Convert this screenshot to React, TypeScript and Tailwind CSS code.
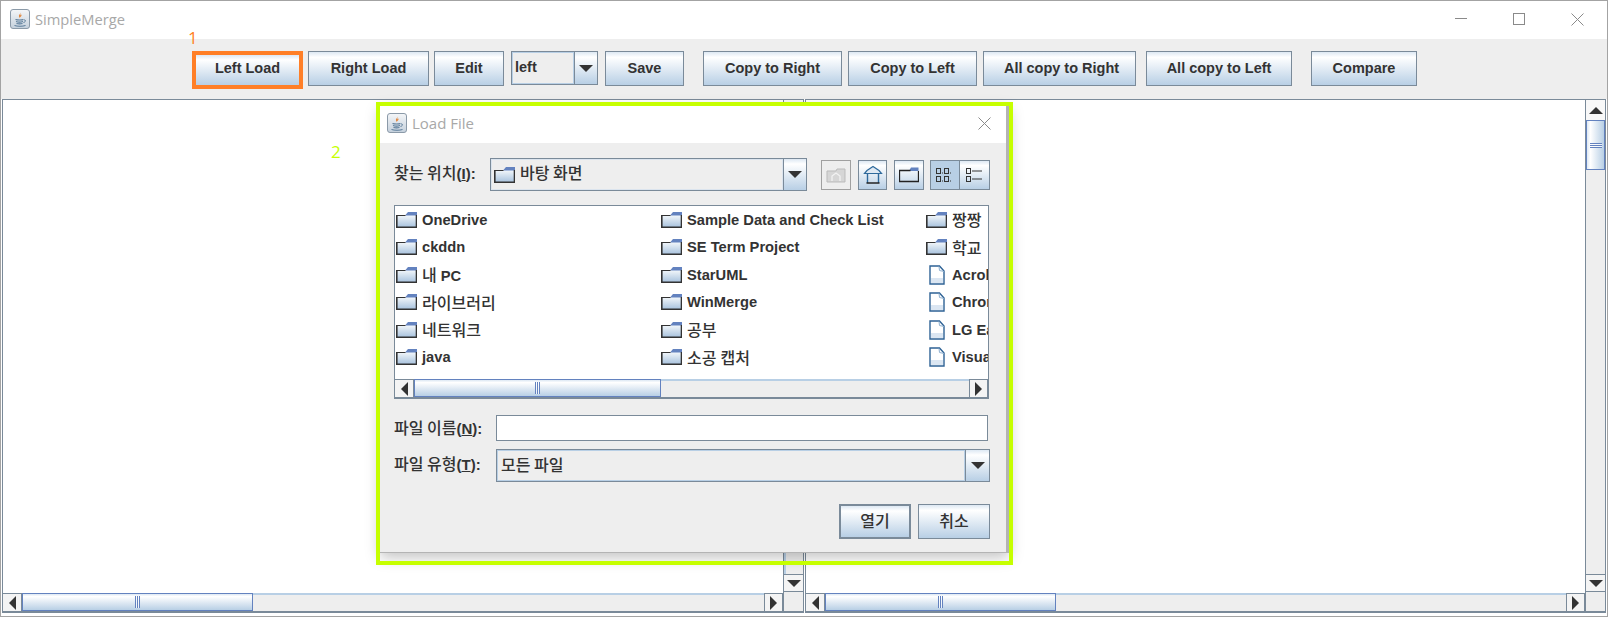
import type { ReactNode } from 'react';

const btnGradient = 'bg-[linear-gradient(#dde8f3_0%,#ffffff_16%,#b8cfe5_100%)]';
const latin = "font-['Liberation_Sans','Noto_Sans_CJK_KR',sans-serif]";

function Ko({ children }: { children: ReactNode }) {
	return <span className="font-['Noto_Sans_CJK_KR',sans-serif] text-[16px] font-medium">{children}</span>;
}

function JavaIcon() {
	return (
		<svg width="20" height="20" viewBox="0 0 20 20" className="shrink-0">
			<defs>
				<linearGradient id="jv" x1="0" y1="0" x2="0" y2="1">
					<stop offset="0" stopColor="#f4f6f8" />
					<stop offset="1" stopColor="#c4d0dc" />
				</linearGradient>
			</defs>
			<rect x="0.5" y="0.5" width="19" height="19" rx="2.5" fill="url(#jv)" stroke="#8b9aa8" />
			<path d="M10.5 2.5c1 2-2 3-1.5 5 .2.8.8 1.2 1 1.5-.1-1.2 2.6-2 1.4-4.2.5 1.6-1 2.2-1 .6 0-1 .6-1.8.1-2.9z" fill="#e0843a" />
			<path d="M5.5 10.5c2 .7 6.500.7 8 0M6 12.500c1.500.5 5.500.5 7 0M6.500 14.500c1.500.4 4.500.4 6 0" fill="none" stroke="#5b7c9a" strokeWidth="1.100" />
			<path d="M4.500 16.500c3 1 8 1 11 0M14 11c2-.5 2 2-.5 2.500" fill="none" stroke="#5b7c9a" strokeWidth="1" />
		</svg>
	);
}

function FolderIcon() {
	return (
		<svg width="21" height="16" viewBox="0 0 21 16" className="shrink-0">
			<defs>
				<linearGradient id="fd" x1="0" y1="0" x2="0" y2="1">
					<stop offset="0" stopColor="#f4f8fb" />
					<stop offset="1" stopColor="#a9c3de" />
				</linearGradient>
			</defs>
			<rect x="1" y="3" width="19" height="12" fill="url(#fd)" />
			<path d="M12 0h9v3.500H9z" fill="#6382bf" />
			<path d="M0.500 3.500h9" fill="none" stroke="#333" />
			<path d="M0.800 3v12.200h19.700V3" fill="none" stroke="#333" strokeWidth="1.600" />
		</svg>
	);
}

function FileIcon() {
	return (
		<svg width="16" height="20" viewBox="0 0 16 20" className="shrink-0">
			<path d="M1 1h9.500l4.500 5v13H1z" fill="#fff" stroke="#2e6295" strokeWidth="1.400" />
			<path d="M2 13h12v5H2z" fill="#dbe6f2" />
			<path d="M10 1.500l.5 4 4.500 1" fill="none" stroke="#8fb0d0" />
		</svg>
	);
}

function Triangle({ dir }: { dir: 'up' | 'down' | 'left' | 'right' }) {
	const points = {
		up: '0,7 14,7 7,0',
		down: '0,0 14,0 7,7',
		left: '7,0 7,14 0,7',
		right: '0,0 0,14 7,7'
	}[dir];
	const vertical = dir === 'up' || dir === 'down';
	return (
		<svg width={vertical ? 14 : 7} height={vertical ? 7 : 14} viewBox={vertical ? '0 0 14 7' : '0 0 7 14'}>
			<polygon points={points} fill="#333333" />
		</svg>
	);
}

function HScrollBar({ thumb }: { thumb: number }) {
	return (
		<div className="flex h-[19px] w-full border-b border-[#7a8a99] bg-[#eeeeee]">
			<div className="flex w-[19px] shrink-0 items-center justify-center border-t border-r border-[#7a8a99] bg-[#f4f4f4]">
				<Triangle dir="left" />
			</div>
			<div
				className={`flex shrink-0 items-center justify-center border border-[#6382bf] ${btnGradient}`}
				style={{ width: thumb }}
			>
				<div className="flex h-[12px] gap-px bg-white/70">
					<div className="w-px bg-[#6382bf]" />
					<div className="w-px bg-[#6382bf]" />
					<div className="w-px bg-[#6382bf]" />
				</div>
			</div>
			<div className="flex-1 border-t-2 border-[#b8cfe5] bg-[#eeeeee]" />
			<div className="flex w-[19px] shrink-0 items-center justify-center border-x border-t border-[#7a8a99] bg-[#f4f4f4]">
				<Triangle dir="right" />
			</div>
		</div>
	);
}

function VScrollBar({ withThumb }: { withThumb: boolean }) {
	return (
		<div className="flex w-[20px] shrink-0 flex-col border-l border-[#7a8a99] bg-[#eeeeee] pb-px">
			<div className="flex h-[20px] shrink-0 items-center justify-center bg-[#f8f8f8]">
				<Triangle dir="up" />
			</div>
			{withThumb && (
				<div className="flex h-[50px] shrink-0 items-center justify-center border border-[#6382bf] bg-[linear-gradient(90deg,#dde8f3_0%,#ffffff_20%,#b8cfe5_100%)]">
					<div className="flex w-[12px] flex-col gap-px bg-white/70">
						<div className="h-px bg-[#6382bf]" />
						<div className="h-px bg-[#6382bf]" />
						<div className="h-px bg-[#6382bf]" />
					</div>
				</div>
			)}
			{withThumb ? <div className="flex-1" /> : <div className="flex-1 border-l-2 border-[#b8cfe5]" />}
			<div className="flex h-[18px] shrink-0 items-center justify-center border-y border-[#7a8a99] bg-[#f4f4f4]">
				<Triangle dir="down" />
			</div>
		</div>
	);
}

function ScrollPane({ width, thumb, withThumb }: { width: string; thumb: number; withThumb: boolean }) {
	return (
		<div className={`flex h-[514px] flex-col border border-[#7a8a99] bg-white ${width}`}>
			<div className="flex min-h-0 flex-1">
				<div className="flex-1 bg-white" />
				<VScrollBar withThumb={withThumb} />
			</div>
			<div className="flex h-[19px] shrink-0">
				<div className="flex-1">
					<HScrollBar thumb={thumb} />
				</div>
				<div className="w-[20px] shrink-0 border-l border-b border-[#7a8a99] bg-[#eeeeee]" />
			</div>
		</div>
	);
}

function ToolButton({ label, className }: { label: string; className: string }) {
	return (
		<button
			className={`flex h-[35px] shrink-0 items-center justify-center border border-[#7a8a99] pt-px text-[14.5px] font-bold text-[#333333] ${btnGradient} ${className}`}
		>
			{label}
		</button>
	);
}

function SmallIconButton({ children, className }: { children: ReactNode; className: string }) {
	return (
		<div className={`flex h-[30px] items-center justify-center border ${className}`}>{children}</div>
	);
}

const column1 = ['OneDrive', 'ckddn', '내 PC', '라이브러리', '네트워크', 'java'];
const column2 = ['Sample Data and Check List', 'SE Term Project', 'StarUML', 'WinMerge', '공부', '소공 캡처'];
const column3 = [
	{ name: '짱짱', file: false },
	{ name: '학교', file: false },
	{ name: 'Acrobat', file: true },
	{ name: 'Chrome', file: true },
	{ name: 'LG Easy', file: true },
	{ name: 'Visual', file: true }
];

function FileName({ name }: { name: string }) {
	// Korean glyphs fall back to a plain weight, latin stays bold
	const parts = name.split(/([가-힣]+)/).filter(Boolean);
	return (
		<span className="whitespace-nowrap text-[14.7px] font-bold text-[#333333]">
			{parts.map((p, i) => (/[가-힣]/.test(p) ? <Ko key={i}>{p}</Ko> : <span key={i}>{p}</span>))}
		</span>
	);
}

function FileRow({ name, file }: { name: string; file: boolean }) {
	return (
		<div className="flex h-[27.5px] items-center">
			{file ? (
				<span className="ml-[3px] mr-[7px] flex">
					<FileIcon />
				</span>
			) : (
				<span className="mr-[5px] flex">
					<FolderIcon />
				</span>
			)}
			<FileName name={name} />
		</div>
	);
}

function LoadDialog() {
	return (
		<div className="absolute left-[379px] top-[105px] flex h-[447px] w-[629px] flex-col border-r-[3px] border-b border-[#b4b4b4] bg-white shadow-[0_4px_14px_rgba(0,0,0,0.25)]">
			<div className="flex h-[37px] shrink-0 items-center justify-between pb-[3px] pl-[7px] pr-[15px]">
				<div className="flex items-center gap-[5px]">
					<JavaIcon />
					<span className="font-['Open_Sans',sans-serif] text-[15px] text-[#a8a8a8]">Load File</span>
				</div>
				<svg width="13" height="13" viewBox="0 0 13 13">
					<path d="M0.500 0.500l12 12M12.500 0.500l-12 12" stroke="#8a8a8a" fill="none" />
				</svg>
			</div>
			<div className="flex flex-1 flex-col bg-[#eeeeee] pl-[14px] pr-[16px] pt-[15px]">
				<div className="flex h-[33px] items-center">
					<span className="w-[96px] shrink-0 pb-[3px] text-[15px] font-bold text-[#333333]">
						<Ko>찾는 위치</Ko>(<span className="underline">I</span>):
					</span>
					<div className="flex h-[33px] w-[317px] shrink-0 border border-[#7a8a99] bg-[#eeeeee]">
						<div className="flex flex-1 items-center gap-[5px] border border-[#dbe4ee] pl-[2px]">
							<FolderIcon />
							<span className="pb-[3px] text-[#333333]">
								<Ko>바탕 화면</Ko>
							</span>
						</div>
						<div className={`flex w-[23px] items-center justify-center border-l border-[#7a8a99] ${btnGradient}`}>
							<Triangle dir="down" />
						</div>
					</div>
					<SmallIconButton className="ml-[14px] w-[30px] border-[#a0a0a0] bg-[#eeeeee]">
						<svg width="20" height="16" viewBox="0 0 20 16">
							<path d="M1 4h9l1-2h8v13H1z" fill="#d6d6d6" stroke="#bbb" />
							<path d="M6 14V9l4-3 4 3v5" fill="none" stroke="#f2f2f2" strokeWidth="1.300" />
						</svg>
					</SmallIconButton>
					<SmallIconButton className={`ml-[7px] w-[29px] border-[#7a8a99] ${btnGradient}`}>
						<svg width="20" height="20" viewBox="0 0 20 20">
							<path d="M1.500 8.500L4 5.500l6-4 6 4 2.500 3z" fill="#dfe9f3" stroke="#2e6a9c" strokeWidth="1.200" />
							<path d="M4.500 9v9M15.500 9v9" stroke="#2e6a9c" strokeWidth="1.400" />
							<path d="M3.500 18h13" stroke="#222" strokeWidth="1.500" />
						</svg>
					</SmallIconButton>
					<SmallIconButton className={`ml-[7px] w-[30px] border-[#7a8a99] ${btnGradient}`}>
						<svg width="20" height="16" viewBox="0 0 20 16">
							<path d="M12 0.500h7.500V4H10z" fill="#6382bf" />
							<path d="M0.500 14.500V3.500h11M0 14.500h19.500V4" fill="none" stroke="#222" strokeWidth="1.300" />
						</svg>
					</SmallIconButton>
					<SmallIconButton className="ml-[6px] w-[30px] border-[#7a8a99] bg-[#b8cfe5]">
						<svg width="20" height="16" viewBox="0 0 20 16" fill="none" stroke="#333">
							<rect x="1.500" y="1.500" width="4" height="5" />
							<rect x="9.500" y="1.500" width="4" height="5" />
							<rect x="1.500" y="9.500" width="4" height="5" />
							<rect x="9.500" y="9.500" width="4" height="5" />
							<path d="M7 6h1M15 6h1M7 14h1M15 14h1" />
						</svg>
					</SmallIconButton>
					<SmallIconButton className={`w-[30px] border-l-0 border-[#7a8a99] ${btnGradient}`}>
						<svg width="20" height="16" viewBox="0 0 20 16" fill="none" stroke="#333">
							<rect x="1.500" y="1.500" width="4" height="5" />
							<rect x="1.500" y="9.500" width="4" height="5" />
							<path d="M7 4h10M7 12h10" />
						</svg>
					</SmallIconButton>
				</div>

				<div className="mt-[14px] flex h-[194px] w-[595px] flex-col border border-[#7a8a99] bg-white">
					<div className="flex flex-1 overflow-hidden pl-px">
						<div className="w-[265px] shrink-0">
							{column1.map((n) => (
								<FileRow key={n} name={n} file={false} />
							))}
						</div>
						<div className="w-[265px] shrink-0">
							{column2.map((n) => (
								<FileRow key={n} name={n} file={false} />
							))}
						</div>
						<div className="flex-1 overflow-hidden">
							{column3.map((c) => (
								<FileRow key={c.name} name={c.name} file={c.file} />
							))}
						</div>
					</div>
					<HScrollBar thumb={247} />
				</div>

				<div className="mt-[16px] flex h-[26px] items-center">
					<span className="w-[102px] shrink-0 text-[15px] font-bold text-[#333333]">
						<Ko>파일 이름</Ko>(<span className="underline">N</span>):
					</span>
					<div className="h-[26px] w-[492px] border border-[#7a8a99] bg-white" />
				</div>
				<div className="mt-[8px] flex h-[33px] items-center">
					<span className="w-[102px] shrink-0 pb-[4px] text-[15px] font-bold text-[#333333]">
						<Ko>파일 유형</Ko>(<span className="underline">T</span>):
					</span>
					<div className="flex h-[33px] w-[494px] border border-[#7a8a99] bg-[#eeeeee]">
						<div className="flex flex-1 items-center border border-[#b8cfe5] pb-[3px] pl-[3px] text-[#333333]">
							<Ko>모든 파일</Ko>
						</div>
						<div className={`flex w-[24px] items-center justify-center border-l border-[#7a8a99] ${btnGradient}`}>
							<Triangle dir="down" />
						</div>
					</div>
				</div>
				<div className="mt-[22px] flex justify-end gap-[7px]">
					<button className={`h-[35px] w-[72px] border-2 border-[#7a8a99] pb-[2px] text-[#333333] ${btnGradient}`}>
						<Ko>열기</Ko>
					</button>
					<button className={`h-[35px] w-[72px] border border-[#7a8a99] pb-[2px] text-[#333333] ${btnGradient}`}>
						<Ko>취소</Ko>
					</button>
				</div>
			</div>
		</div>
	);
}

export default function App() {
	return (
		<div className={`relative h-[617px] w-[1608px] overflow-hidden border border-[#a3a3a3] bg-white ${latin}`}>
			<div className="flex h-[38px] items-center justify-between pb-[2px] pl-[9px]">
				<div className="flex items-center gap-[5px]">
					<JavaIcon />
					<span className="font-['Open_Sans',sans-serif] text-[14.7px] text-[#a8a8a8]">SimpleMerge</span>
				</div>
				<div className="mr-[23px] flex items-center gap-[46px]">
					<svg width="12" height="12" viewBox="0 0 12 12">
						<path d="M0 5.500h12" stroke="#8a8a8a" fill="none" />
					</svg>
					<svg width="12" height="12" viewBox="0 0 12 12">
						<rect x="0.500" y="0.500" width="11" height="11" stroke="#8a8a8a" fill="none" />
					</svg>
					<svg width="13" height="13" viewBox="0 0 13 13">
						<path d="M0.500 0.500l12 12M12.500 0.500l-12 12" stroke="#8a8a8a" fill="none" />
					</svg>
				</div>
			</div>

			<div className="flex h-[60px] items-start bg-[#eeeeee] pl-[191px] pt-[12px]">
				<button className={`flex h-[38px] w-[111px] shrink-0 items-center justify-center border-4 border-[#ff7f27] pb-[2px] text-[14.5px] font-bold text-[#333333] ${btnGradient}`}>
					Left Load
				</button>
				<ToolButton label="Right Load" className="ml-[5px] w-[121px]" />
				<ToolButton label="Edit" className="ml-[5px] w-[70px]" />
				<div className="ml-[7px] flex h-[34px] w-[87px] shrink-0 border border-[#7a8a99] bg-[#eeeeee]">
					<div className="flex flex-1 items-center border border-[#b8cfe5] pb-px pl-[2px] text-[14.5px] font-bold text-[#333333]">left</div>
					<div className={`flex w-[23px] items-center justify-center border-l border-[#7a8a99] ${btnGradient}`}>
						<Triangle dir="down" />
					</div>
				</div>
				<ToolButton label="Save" className="ml-[7px] w-[79px]" />
				<ToolButton label="Copy to Right" className="ml-[19px] w-[139px]" />
				<ToolButton label="Copy to Left" className="ml-[6px] w-[129px]" />
				<ToolButton label="All copy to Right" className="ml-[6px] w-[153px] pl-[4px]" />
				<ToolButton label="All copy to Left" className="ml-[10px] w-[146px]" />
				<ToolButton label="Compare" className="ml-[19px] w-[106px]" />
			</div>

			<div className="flex gap-px pl-px">
				<ScrollPane width="w-[802px]" thumb={231} withThumb={false} />
				<ScrollPane width="w-[801px]" thumb={231} withThumb={true} />
			</div>

			<LoadDialog />

			{/* annotations drawn over the screenshot */}
			<span className="absolute left-[187px] top-[28px] font-['Open_Sans',sans-serif] text-[17px] leading-none text-[#ff7f27]">1</span>
			<span className="absolute left-[330px] top-[142px] font-['Open_Sans',sans-serif] text-[17px] leading-none text-[#c6ff00]">2</span>
			<div className="pointer-events-none absolute left-[375px] top-[101px] h-[463px] w-[637px] border-4 border-[#c6ff00]" />
		</div>
	);
}
